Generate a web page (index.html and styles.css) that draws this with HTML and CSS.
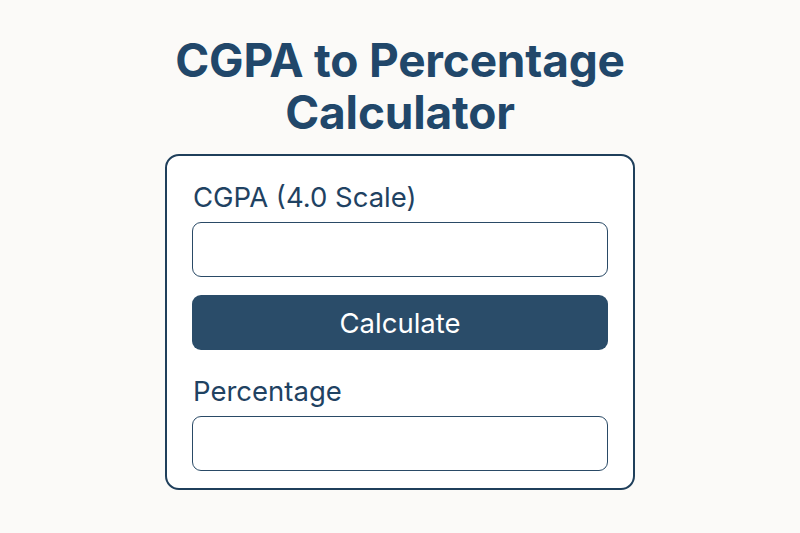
FILE: index.html
```html
<!DOCTYPE html>
<html>

<head>
    <title>CGPA to Percentage Calculator</title>
    <meta charset="utf-8">
    <link rel="stylesheet" href="styles.css">
</head>

<body>
    <div class="page">
        <h1 class="title">CGPA to Percentage<br>Calculator</h1>
        <div class="card">
            <label class="field-label" for="cgpa">CGPA (4.0 Scale)</label>
            <input class="field-input" type="text" id="cgpa">
            <button class="calc-button" type="button">Calculate</button>
            <label class="field-label second" for="percentage">Percentage</label>
            <input class="field-input" type="text" id="percentage" readonly>
        </div>
    </div>
</body>

</html>
```

FILE: styles.css
```css
* {
    box-sizing: border-box;
}

body {
    margin: 0;
    background-color: #fbfaf8;
    font-family: Inter, "Noto Sans", sans-serif;
    color: #21466a;
}

.page {
    display: flex;
    flex-direction: column;
    align-items: center;
    padding-top: 34px;
}

.title {
    margin: 0 0 16px 0;
    text-align: center;
    font-size: 46px;
    line-height: 52px;
    font-weight: 700;
    color: #21476a;
    letter-spacing: -0.2px;
}

.card {
    width: 470px;
    height: 336px;
    display: flex;
    flex-direction: column;
    padding: 24px 25px 0 25px;
    border: 2px solid #1f3f5b;
    border-radius: 14px;
    background-color: #ffffff;
}

.field-label {
    font-size: 27.5px;
    line-height: 34px;
    color: #1f4262;
    padding-left: 1px;
}

.field-label.second {
    margin-top: 24px;
}

.field-input {
    height: 55px;
    margin-top: 8px;
    border: 1.5px solid #2a4a66;
    border-radius: 9px;
    background-color: #ffffff;
    font-family: inherit;
    font-size: 22px;
    padding: 0 12px;
}

.calc-button {
    height: 55px;
    margin-top: 18px;
    border: none;
    border-radius: 9px;
    background-color: #2a4c69;
    color: #ffffff;
    font-family: inherit;
    font-size: 27.5px;
    padding: 0;
}
```
